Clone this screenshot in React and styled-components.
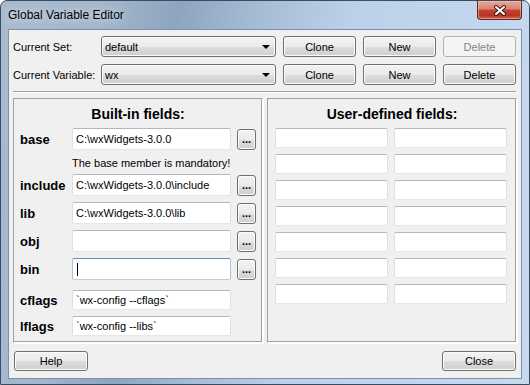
import styled, { createGlobalStyle } from 'styled-components';

const GlobalStyle = createGlobalStyle`
  html, body {
    margin: 0;
    padding: 0;
    background: #fff;
  }
  body {
    font-family: "Liberation Sans", Arial, sans-serif;
    font-size: 11px;
    color: #000;
  }
  * {
    box-sizing: border-box;
  }
`;

const Window = styled.div`
  width: 530px;
  height: 385px;
  display: flex;
  flex-direction: column;
  border: 1px solid #3b4c60;
  border-radius: 7px 7px 0 0;
  overflow: hidden;
  background: linear-gradient(
    100deg,
    #a9bbcf 0%,
    #a2b6cc 18%,
    #8da5bf 30%,
    #a3bad3 42%,
    #bcd2ea 60%,
    #c6daef 100%
  );
`;

const TitleBar = styled.div`
  height: 28px;
  display: flex;
  align-items: flex-start;
  padding: 0 7px 0 7px;
`;

const Title = styled.span`
  margin-top: 7px;
  font-size: 12px;
  line-height: 14px;
  text-shadow: 0 0 8px rgba(255, 255, 255, 0.9);
`;

const CloseBox = styled.div`
  margin-left: auto;
  width: 45px;
  height: 19px;
  display: flex;
  align-items: center;
  justify-content: center;
  border: 1px solid #5b261c;
  border-top: none;
  border-radius: 0 0 4px 4px;
  background: linear-gradient(#e9a99a 0%, #d7826f 45%, #c4432f 50%, #b8321f 80%, #d26a55 100%);
  box-shadow: inset 0 0 0 1px rgba(255, 200, 190, 0.5);
`;

const Client = styled.div`
  flex: 1;
  margin: 0 7px 5px;
  background: #f0f0f0;
  border: 1px solid #7d90a6;
  padding: 6px 5px 7px 4px;
  display: flex;
  flex-direction: column;
`;

const TopGrid = styled.div`
  display: grid;
  grid-template-columns: 81px 175px 73px 73px 73px;
  grid-template-rows: 21px 21px;
  column-gap: 7px;
  row-gap: 7px;
  align-items: center;
`;

const Label = styled.span`
  font-size: 11px;
  white-space: nowrap;
`;

const Button = styled.button`
  height: ${p => p.$h || 21}px;
  width: ${p => (p.$w ? `${p.$w}px` : 'auto')};
  padding: 0;
  font-family: "Liberation Sans", Arial, sans-serif;
  font-size: 11px;
  color: #000;
  border: 1px solid #707070;
  border-radius: 3px;
  background: linear-gradient(#f2f2f2 0%, #ebebeb 50%, #dddddd 51%, #cfcfcf 100%);
  box-shadow: inset 0 0 0 1px #fbfbfb;

  &:disabled {
    color: #838383;
    border-color: #adb2b5;
    background: #f4f4f4;
    box-shadow: none;
  }
`;

const Combo = styled.div`
  height: 21px;
  display: flex;
  align-items: center;
  padding: 0 4px 0 3px;
  border: 1px solid #707070;
  border-radius: 3px;
  background: linear-gradient(#f2f2f2 0%, #ebebeb 50%, #dddddd 51%, #cfcfcf 100%);
  box-shadow: inset 0 0 0 1px #fbfbfb;
`;

const ComboText = styled.span`
  flex: 1;
`;

const Arrow = styled.span`
  width: 0;
  height: 0;
  border-left: 4px solid transparent;
  border-right: 4px solid transparent;
  border-top: 4px solid #000;
  margin-right: 1px;
`;

const Separator = styled.div`
  margin-top: 6px;
  height: 2px;
  border-top: 1px solid #a0a0a0;
  border-bottom: 1px solid #fff;
`;

const Panels = styled.div`
  flex: 1;
  margin-top: 5px;
  display: grid;
  grid-template-columns: 250px 250px;
  column-gap: 4px;
`;

const Panel = styled.div`
  border: 1px solid;
  border-color: #a0a0a0 #fff #fff #a0a0a0;
  box-shadow: inset -1px -1px 0 #a0a0a0, 1px 1px 0 #fff;
  display: flex;
  flex-direction: column;
`;

const Heading = styled.div`
  margin: 6px 0 5px;
  text-align: center;
  font-size: 14px;
  font-weight: bold;
  line-height: 18px;
`;

const FieldRow = styled.div`
  display: grid;
  grid-template-columns: 46px 159px 19px;
  column-gap: 6px;
  align-items: center;
  height: ${p => p.$h || 22}px;
  margin-top: ${p => p.$gap || 0}px;
  padding-left: 6px;
`;

const FieldName = styled.span`
  font-size: 13px;
  font-weight: bold;
`;

const Field = styled.div`
  height: ${p => p.$h || 22}px;
  display: flex;
  align-items: center;
  padding-left: 3px;
  background: #fff;
  border: 1px solid;
  border-color: ${p => (p.$focus ? '#5d90c8 #a6c5e6 #b5cfe7 #a6c5e6' : '#b4b7be #dcdfe4 #e3e6ea #dcdfe4')};
  border-radius: 2px;
  white-space: nowrap;
  overflow: hidden;
`;

const Caret = styled.span`
  width: 1px;
  height: 13px;
  margin-left: 1px;
  background: #000;
`;

const Dots = styled(Button)`
  width: 19px;
  display: flex;
  align-items: flex-end;
  justify-content: center;
  padding-bottom: 4px;
  line-height: 1;
  font-weight: bold;
  letter-spacing: 0;
`;

const Notice = styled.div`
  margin: 6px 0 4px;
  padding-left: 58px;
  line-height: 14px;
`;

const UserGrid = styled.div`
  display: grid;
  grid-template-columns: 113px 113px;
  grid-auto-rows: 20px;
  gap: 6px;
  padding: 0 7px;
`;

const Footer = styled.div`
  margin-top: 8px;
  display: flex;
  justify-content: space-between;
  padding-left: 1px;
`;

const builtIn = [
  { name: 'include', value: 'C:\\wxWidgets-3.0.0\\include', gap: 0 },
  { name: 'lib', value: 'C:\\wxWidgets-3.0.0\\lib', gap: 6 },
  { name: 'obj', value: '', gap: 6 },
  { name: 'bin', value: '', gap: 6, focus: true },
];

export default function App() {
  return (
    <>
      <GlobalStyle />
      <Window>
        <TitleBar>
          <Title>Global Variable Editor</Title>
          <CloseBox>
            <svg width="14" height="11" viewBox="0 0 14 11">
              <path d="M3 2 L11 9 M11 2 L3 9" stroke="#3a1a14" strokeWidth="4" strokeLinecap="round" />
              <path d="M3 2 L11 9 M11 2 L3 9" stroke="#fff" strokeWidth="2" strokeLinecap="round" />
            </svg>
          </CloseBox>
        </TitleBar>
        <Client>
          <TopGrid>
            <Label>Current Set:</Label>
            <Combo>
              <ComboText>default</ComboText>
              <Arrow />
            </Combo>
            <Button>Clone</Button>
            <Button>New</Button>
            <Button disabled>Delete</Button>
            <Label>Current Variable:</Label>
            <Combo>
              <ComboText>wx</ComboText>
              <Arrow />
            </Combo>
            <Button>Clone</Button>
            <Button>New</Button>
            <Button>Delete</Button>
          </TopGrid>
          <Separator />
          <Panels>
            <Panel>
              <Heading>Built-in fields:</Heading>
              <FieldRow>
                <FieldName>base</FieldName>
                <Field>C:\wxWidgets-3.0.0</Field>
                <Dots>...</Dots>
              </FieldRow>
              <Notice>The base member is mandatory!</Notice>
              {builtIn.map(f => (
                <FieldRow key={f.name} $gap={f.gap}>
                  <FieldName>{f.name}</FieldName>
                  <Field $focus={f.focus}>{f.value}{f.focus && <Caret />}</Field>
                  <Dots>...</Dots>
                </FieldRow>
              ))}
              <FieldRow $gap={10} $h={20}>
                <FieldName>cflags</FieldName>
                <Field $h={20}>`wx-config --cflags`</Field>
              </FieldRow>
              <FieldRow $gap={6} $h={20}>
                <FieldName>lflags</FieldName>
                <Field $h={20}>`wx-config --libs`</Field>
              </FieldRow>
            </Panel>
            <Panel>
              <Heading>User-defined fields:</Heading>
              <UserGrid>
                {Array.from({ length: 14 }).map((_, i) => (
                  <Field key={i} $h={20} />
                ))}
              </UserGrid>
            </Panel>
          </Panels>
          <Footer>
            <Button $w={74} $h={20}>Help</Button>
            <Button $w={74} $h={20}>Close</Button>
          </Footer>
        </Client>
      </Window>
    </>
  );
}
